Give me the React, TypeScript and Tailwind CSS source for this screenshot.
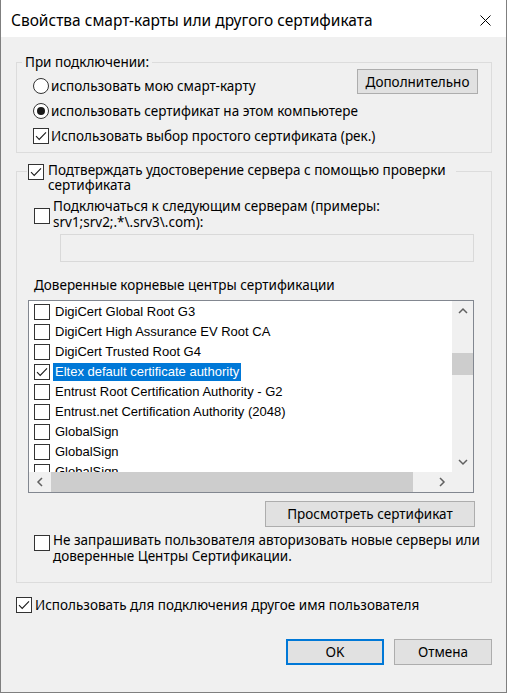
import type { ReactNode } from 'react';

const ui = "font-['Noto_Sans',sans-serif] text-[13.5px] leading-[16px] text-black";

function CheckBox({ checked = false, className = '' }: { checked?: boolean; className?: string }) {
  return (
    <span className={`flex size-[16px] shrink-0 items-center justify-center border border-[#333333] bg-white ${className}`}>
      {checked && (
        <svg width="12" height="10" viewBox="0 0 12 10" fill="none">
          <path d="M1 5.2 4.2 8.4 11 1.4" stroke="#1a1a1a" strokeWidth="1.1" />
        </svg>
      )}
    </span>
  );
}

function Radio({ checked = false }: { checked?: boolean }) {
  return (
    <span className="flex size-[16px] shrink-0 items-center justify-center rounded-full border border-[#333333] bg-white">
      {checked && <span className="size-[8px] rounded-full bg-[#1a1a1a]" />}
    </span>
  );
}

function Button({ children, className = '' }: { children: ReactNode; className?: string }) {
  return (
    <button type="button" className={`flex shrink-0 items-center justify-center bg-[#e1e1e1] ${className}`}>
      {children}
    </button>
  );
}

function Chevron({ dir }: { dir: 'up' | 'down' | 'left' | 'right' }) {
  const d = {
    up: 'M1 7 5 3 9 7',
    down: 'M1 3 5 7 9 3',
    left: 'M7 1 3 5 7 9',
    right: 'M3 1 7 5 3 9',
  }[dir];
  return (
    <svg width="10" height="10" viewBox="0 0 10 10" fill="none">
      <path d={d} stroke="#606060" strokeWidth="1.5" />
    </svg>
  );
}

const authorities = [
  'DigiCert Global Root G3',
  'DigiCert High Assurance EV Root CA',
  'DigiCert Trusted Root G4',
  'Eltex default certificate authority',
  'Entrust Root Certification Authority - G2',
  'Entrust.net Certification Authority (2048)',
  'GlobalSign',
  'GlobalSign',
  'GlobalSign',
];

function AuthorityList() {
  return (
    <div className="ml-[11px] mt-[7px] flex h-[193px] w-[446px] flex-col border border-[#828790] bg-white">
      <div className="flex min-h-0 flex-1">
        <div className="flex-1 overflow-hidden pt-[1px] font-['Liberation_Sans',Arial,sans-serif] text-[13px]">
          {authorities.map((name, i) => {
            const selected = i === 3;
            return (
              <div key={i} className="flex h-[20px] items-center pl-[5px]">
                <CheckBox checked={selected} />
                <span
                  className={`ml-[3px] whitespace-nowrap px-[2px] leading-[18px] ${selected ? 'bg-[#0078d7] text-white' : ''}`}
                >
                  {name}
                </span>
              </div>
            );
          })}
        </div>
        <div className="flex w-[21px] flex-col bg-[#f0f0f0]">
          <div className="flex h-[20px] items-center justify-center">
            <Chevron dir="up" />
          </div>
          <div className="flex-1">
            <div className="mt-[32px] h-[22px] bg-[#cdcdcd]" />
          </div>
          <div className="flex h-[20px] items-center justify-center">
            <Chevron dir="down" />
          </div>
        </div>
      </div>
      <div className="flex h-[20px] bg-[#f0f0f0]">
        <div className="flex w-[22px] items-center justify-center">
          <Chevron dir="left" />
        </div>
        <div className="flex-1">
          <div className="h-full w-[362px] bg-[#cdcdcd]" />
        </div>
        <div className="flex w-[20px] items-center justify-center">
          <Chevron dir="right" />
        </div>
        <div className="w-[21px]" />
      </div>
    </div>
  );
}

export default function App() {
  return (
    <div className={`flex h-[693px] w-[507px] flex-col border-x border-b border-[#7f7f7f] bg-[#f0f0f0] ${ui}`}>
      <div className="flex h-[37px] shrink-0 items-center justify-between bg-white pl-[10px] pr-[15px] pt-[3px]">
        <span className="text-[15.5px] leading-[20px]">Свойства смарт-карты или другого сертификата</span>
        <svg width="11" height="11" viewBox="0 0 11 11" fill="none">
          <path d="M0.5 0.5 10.5 10.5 M10.5 0.5 0.5 10.5" stroke="#000000" strokeWidth="1" />
        </svg>
      </div>

      <div className="flex flex-col pl-[15px]">
        {/* group: connection */}
        <fieldset className="mt-[17px] w-[476px] border border-[#dcdcdc] pb-[4px] pt-[3px]">
          <legend className="ml-[5px] px-[3px] leading-[16px]">При подключении:</legend>
          <div className="flex flex-col whitespace-nowrap pl-[16px] pr-[13px]">
            <div className="flex items-start justify-between">
              <div className="flex h-[25px] items-center gap-[2px]">
                <Radio />
                <span>использовать мою смарт-карту</span>
              </div>
              <Button className="-mt-[4px] h-[25px] w-[121px] border border-[#adadad]">Дополнительно</Button>
            </div>
            <div className="flex h-[25px] items-center gap-[2px]">
              <Radio checked />
              <span>использовать сертификат на этом компьютере</span>
            </div>
            <div className="flex h-[25px] items-center gap-[2px]">
              <CheckBox checked />
              <span>Использовать выбор простого сертификата (рек.)</span>
            </div>
          </div>
        </fieldset>

        {/* group: server validation */}
        <fieldset className="mt-[9px] w-[476px] border border-[#dcdcdc] pb-[18px]">
          <legend className="ml-[10px] w-[429px] pl-[1px]">
            <div className="flex items-start">
              <CheckBox checked className="mt-[2px]" />
              <span className="ml-[4px] whitespace-nowrap">Подтверждать удостоверение сервера с помощью проверки</span>
            </div>
          </legend>
          <div className="-mt-[3px] pl-[31px]">сертификата</div>

          <div className="mt-[5px] flex items-start pl-[17px]">
            <CheckBox className="mt-[10px]" />
            <span className="ml-[3px] whitespace-nowrap">
              Подключаться к следующим серверам (примеры:
              <br />
              srv1;srv2;.*\.srv3\.com):
            </span>
          </div>

          <div className="ml-[43px] mt-[4px] h-[28px] w-[414px] border border-[#d9d9d9] bg-[#f0f0f0]" />

          <div className="mt-[15px] pl-[17px]">Доверенные корневые центры сертификации</div>

          <AuthorityList />

          <Button className="ml-[248px] mt-[8px] h-[26px] w-[210px] border border-[#adadad]">Просмотреть сертификат</Button>

          <div className="mt-[5px] flex items-start pl-[17px]">
            <CheckBox className="mt-[3px]" />
            <span className="ml-[3px] whitespace-nowrap">
              Не запрашивать пользователя авторизовать новые серверы или
              <br />
              доверенные Центры Сертификации.
            </span>
          </div>
        </fieldset>

        <div className="mt-[14px] flex items-center">
          <CheckBox checked />
          <span className="ml-[3px]">Использовать для подключения другое имя пользователя</span>
        </div>

        <div className="mt-[26px] flex w-[476px] justify-end gap-[10px]">
          <Button className="h-[26px] w-[98px] border-2 border-[#0078d7]">OK</Button>
          <Button className="h-[26px] w-[98px] border border-[#adadad]">Отмена</Button>
        </div>
      </div>
    </div>
  );
}
